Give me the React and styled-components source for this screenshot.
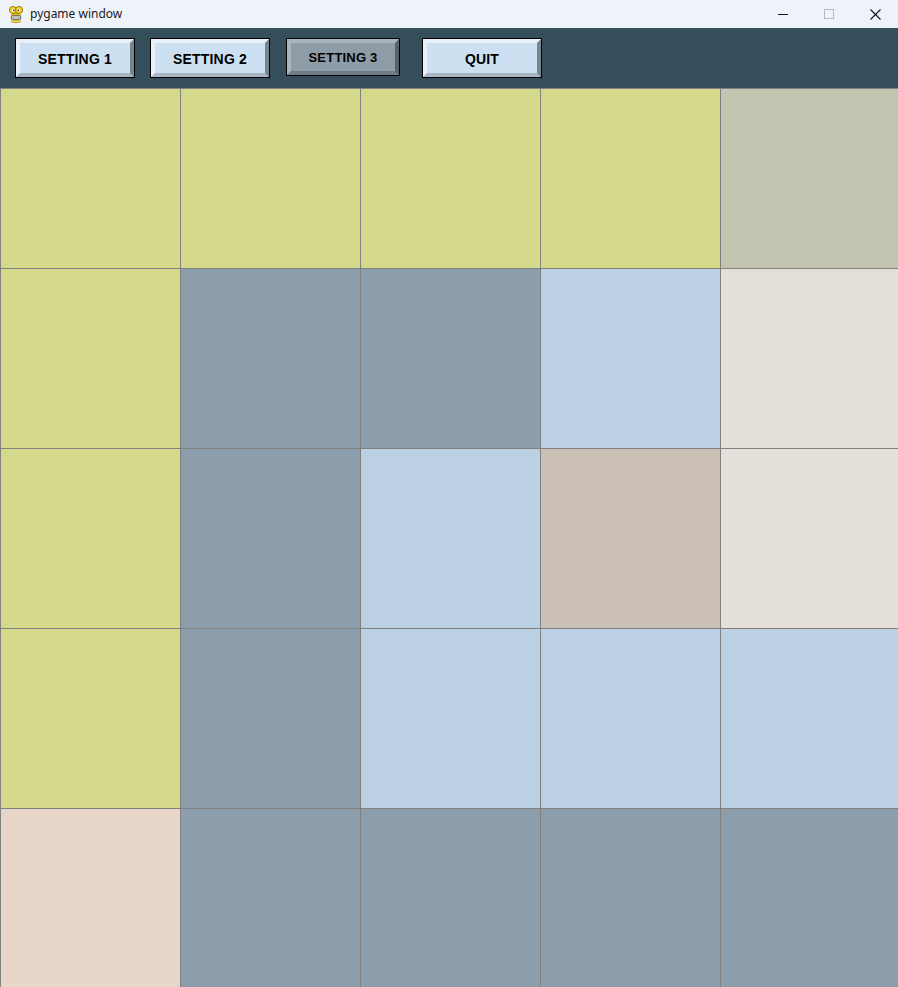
import React from "react";
import styled, { createGlobalStyle } from "styled-components";

const Global = createGlobalStyle`
  html, body { margin: 0; padding: 0; background: #eef3f9; overflow: hidden; }
  * { box-sizing: border-box; }
`;

const Window = styled.div`
  width: 898px;
  height: 987px;
  overflow: hidden;
  display: flex;
  flex-direction: column;
`;

const TitleBar = styled.div`
  height: 28px;
  flex: none;
  background: #eef3f9;
  display: flex;
  align-items: center;
  padding-left: 8px;
  font-family: "Noto Sans", "Open Sans", sans-serif;
  font-size: 12px;
  color: #1a1a1a;
`;

const Title = styled.span`
  margin-left: 6px;
  margin-top: -1px;
`;

const Controls = styled.div`
  margin-left: auto;
  display: flex;
  align-items: center;
  height: 100%;
`;

const Ctrl = styled.div`
  width: 46px;
  height: 100%;
  display: flex;
  align-items: center;
  justify-content: center;
`;

const Toolbar = styled.div`
  height: 60px;
  flex: none;
  background: #354e5b;
  display: flex;
  align-items: flex-start;
  padding: 10px 0 0 15px;
`;

const Button = styled.div`
  width: ${(p) => (p.$pressed ? 114 : 120)}px;
  height: ${(p) => (p.$pressed ? 38 : 40)}px;
  margin-right: ${(p) => p.$mr}px;
  border: 1px solid #000;
  flex: none;
  display: flex;
`;

const Face = styled.div`
  flex: 1;
  border-style: solid;
  border-width: 4px;
  border-top-color: ${(p) => (p.$pressed ? "#a9b4be" : "#e9f0f7")};
  border-left-color: ${(p) => (p.$pressed ? "#a9b4be" : "#e9f0f7")};
  border-right-color: ${(p) => (p.$pressed ? "#56636d" : "#76868f")};
  border-bottom-color: ${(p) => (p.$pressed ? "#6f7b85" : "#a7b6c3")};
  background: ${(p) => (p.$pressed ? "#8e9ca8" : "#cce0f2")};
  display: flex;
  align-items: center;
  justify-content: center;
  font-family: "Liberation Sans", Arial, sans-serif;
  font-weight: 700;
  font-size: ${(p) => (p.$pressed ? 13 : 14)}px;
  color: #000;
  letter-spacing: 0.2px;
  padding-top: 1px;
`;

const Grid = styled.div`
  display: grid;
  grid-template-columns: repeat(5, 180px);
  grid-auto-rows: 180px;
  width: 900px;
`;

const Cell = styled.div`
  background: ${(p) => p.$c};
  border-left: 1px solid #808080;
  border-top: 1px solid #808080;
`;

const C = {
  Y: "#d4da89",
  G: "#c4c5b1",
  S: "#8c9dac",
  B: "#bbd1e3",
  W: "#e4dfd9",
  T: "#cbc0b5",
  P: "#e9d6ca",
};

const layout = [
  "YYYYG",
  "YSSBW",
  "YSBTW",
  "YSBBB",
  "PSSSS",
];

const PyIcon = () => (
  <svg width="16" height="18" viewBox="0 0 16 18">
    <ellipse cx="8" cy="12" rx="5.5" ry="4.5" fill="#e2b400" />
    <rect x="3" y="10" width="10" height="5" rx="1.5" fill="#7a7a7a" />
    <rect x="4" y="11" width="8" height="3" fill="#bdbdbd" />
    <circle cx="5" cy="5" r="3.6" fill="#f5cc1a" stroke="#8a6a00" strokeWidth="0.8" />
    <circle cx="11" cy="5" r="3.6" fill="#f5cc1a" stroke="#8a6a00" strokeWidth="0.8" />
    <circle cx="5.4" cy="5" r="1.6" fill="#fff" />
    <circle cx="10.6" cy="5" r="1.6" fill="#fff" />
    <circle cx="5.8" cy="5.2" r="0.8" fill="#000" />
    <circle cx="10.2" cy="5.2" r="0.8" fill="#000" />
    <path d="M3 16.5 Q8 18.5 13 16.5" stroke="#c99a00" strokeWidth="1.2" fill="none" />
  </svg>
);

const buttons = [
  { label: "SETTING 1", mr: 15 },
  { label: "SETTING 2", mr: 16 },
  { label: "SETTING 3", mr: 22, pressed: true },
  { label: "QUIT", mr: 0 },
];

export default function App() {
  return (
    <>
      <Global />
      <Window>
        <TitleBar>
          <PyIcon />
          <Title>pygame window</Title>
          <Controls>
            <Ctrl>
              <svg width="10" height="10" viewBox="0 0 10 10">
                <line x1="0" y1="5.5" x2="10" y2="5.5" stroke="#111" strokeWidth="1" />
              </svg>
            </Ctrl>
            <Ctrl>
              <svg width="10" height="10" viewBox="0 0 10 10">
                <rect x="0.5" y="0.5" width="9" height="9" fill="none" stroke="#b8bcc2" strokeWidth="1" />
              </svg>
            </Ctrl>
            <Ctrl>
              <svg width="11" height="11" viewBox="0 0 11 11">
                <path d="M0.5 0.5 L10.5 10.5 M10.5 0.5 L0.5 10.5" stroke="#111" strokeWidth="1.1" />
              </svg>
            </Ctrl>
          </Controls>
        </TitleBar>
        <Toolbar>
          {buttons.map((b) => (
            <Button key={b.label} $mr={b.mr} $pressed={b.pressed}>
              <Face $pressed={b.pressed}>{b.label}</Face>
            </Button>
          ))}
        </Toolbar>
        <Grid>
          {layout.flatMap((row, r) =>
            row.split("").map((k, c) => <Cell key={`${r}-${c}`} $c={C[k]} />)
          )}
        </Grid>
      </Window>
    </>
  );
}
